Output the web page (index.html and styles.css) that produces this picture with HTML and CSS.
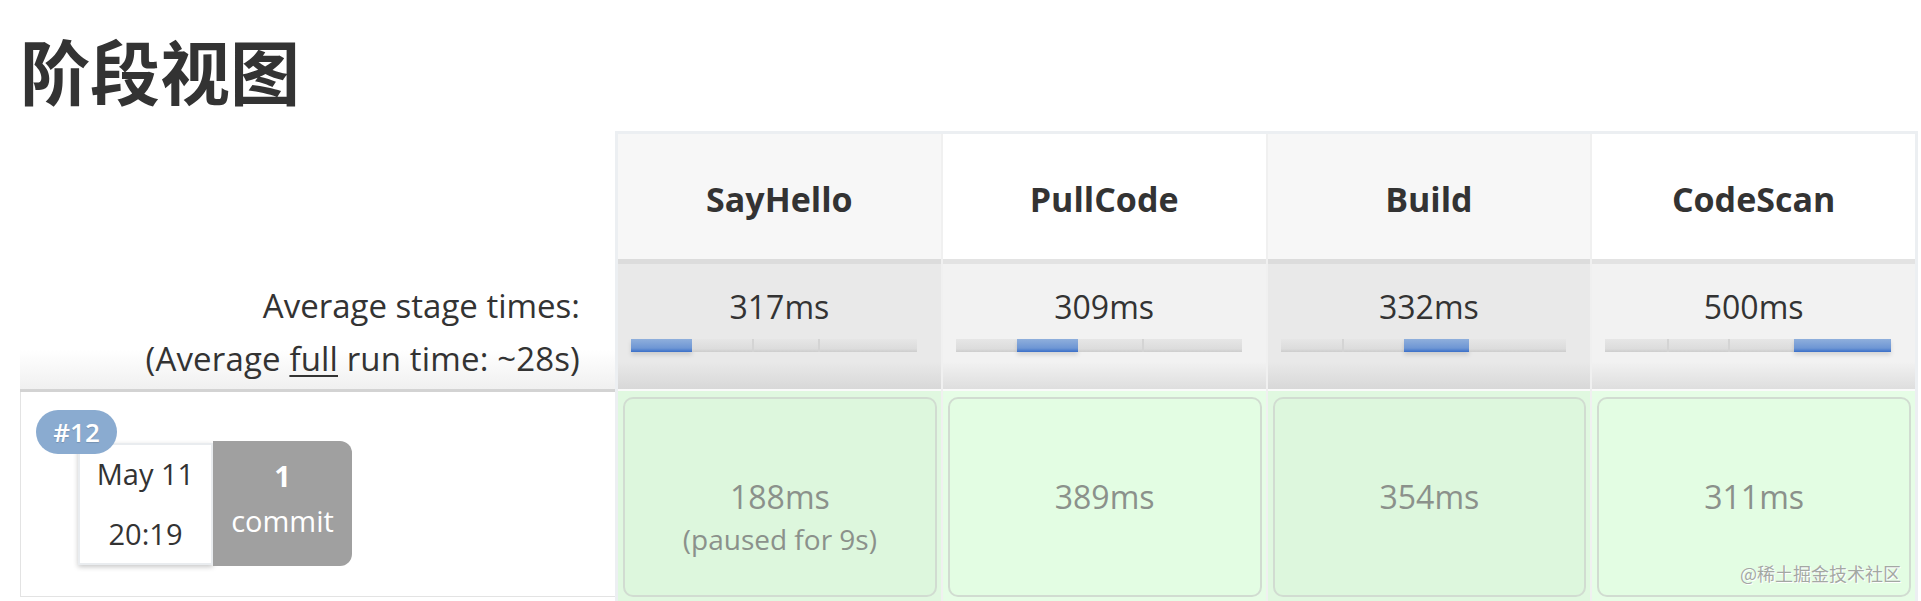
FILE: index.html
```html
<!DOCTYPE html>
<html lang="zh-CN">
<head>
<meta charset="utf-8">
<title>阶段视图</title>
<link rel="stylesheet" href="styles.css">
</head>
<body>
<div class="page">
  <h1 class="title">阶段视图</h1>
  <div class="view">
    <div class="labels">
      <div class="lbl-head"></div>
      <div class="lbl-avg">
        <div class="lbl-line">Average stage times:</div>
        <div class="lbl-line">(Average <u>full</u> run time: ~28s)</div>
      </div>
      <div class="lbl-run">
        <div class="run-info">
          <span class="badge">#12</span>
          <div class="date-box">
            <div>May 11</div>
            <div>20:19</div>
          </div>
          <div class="commit-box">
            <div class="commit-num">1</div>
            <div>commit</div>
          </div>
        </div>
      </div>
    </div>
    <div class="stages">
      <div class="head odd">SayHello</div>
      <div class="head even">PullCode</div>
      <div class="head odd">Build</div>
      <div class="head even">CodeScan</div>

      <div class="avg odd">
        <div class="avg-time">317ms</div>
        <div class="bar">
          <span class="seg on" style="flex-grow:317"></span>
          <span class="seg" style="flex-grow:309"></span>
          <span class="seg" style="flex-grow:332"></span>
          <span class="seg" style="flex-grow:500"></span>
        </div>
      </div>
      <div class="avg even">
        <div class="avg-time">309ms</div>
        <div class="bar">
          <span class="seg" style="flex-grow:317"></span>
          <span class="seg on" style="flex-grow:309"></span>
          <span class="seg" style="flex-grow:332"></span>
          <span class="seg" style="flex-grow:500"></span>
        </div>
      </div>
      <div class="avg odd">
        <div class="avg-time">332ms</div>
        <div class="bar">
          <span class="seg" style="flex-grow:317"></span>
          <span class="seg" style="flex-grow:309"></span>
          <span class="seg on" style="flex-grow:332"></span>
          <span class="seg" style="flex-grow:500"></span>
        </div>
      </div>
      <div class="avg even">
        <div class="avg-time">500ms</div>
        <div class="bar">
          <span class="seg" style="flex-grow:317"></span>
          <span class="seg" style="flex-grow:309"></span>
          <span class="seg" style="flex-grow:332"></span>
          <span class="seg on" style="flex-grow:500"></span>
        </div>
      </div>

      <div class="run odd">
        <div class="run-box">
          <div class="dur">188ms</div>
          <div class="paused">(paused for 9s)</div>
        </div>
      </div>
      <div class="run even">
        <div class="run-box">
          <div class="dur">389ms</div>
        </div>
      </div>
      <div class="run odd">
        <div class="run-box">
          <div class="dur">354ms</div>
        </div>
      </div>
      <div class="run even">
        <div class="run-box">
          <div class="dur">311ms</div>
          <span class="watermark">@稀土掘金技术社区</span>
        </div>
      </div>
    </div>
  </div>
</div>
</body>
</html>
```
FILE: styles.css
```css
* { box-sizing: border-box; }

html, body {
  margin: 0;
  background: #fff;
}

body {
  font-family: "Open Sans", "Noto Sans", "Noto Sans CJK SC", sans-serif;
  color: #333;
  overflow: hidden;
}

.page {
  padding: 0 3px 0 20px;
  height: 601px;
}

.title {
  margin: 0;
  height: 131px;
  padding-top: 35px;
  font-family: "Noto Sans CJK SC", sans-serif;
  font-weight: 700;
  font-size: 70px;
  line-height: 70px;
  color: #333;
}

.view {
  display: flex;
  align-items: flex-start;
}

/* left label column */
.labels {
  width: 595px;
  flex: none;
  display: flex;
  flex-direction: column;
}

.lbl-head {
  height: 128px;
}

.lbl-avg {
  height: 133px;
  border-bottom: 3px solid #d3d3d3;
  background: linear-gradient(#fff 70%, #f0f0f0);
  padding: 20px 35px 0 0;
  text-align: right;
  font-size: 33px;
  line-height: 53px;
  color: #333;
}

.lbl-line + .lbl-line {
  letter-spacing: 0.15px;
}

.lbl-line u {
  text-decoration-thickness: 2px;
  text-underline-offset: 4px;
}

.lbl-run {
  height: 205px;
  border-left: 1px solid #e3e3e3;
  border-bottom: 1px solid #e3e3e3;
  padding: 49px 0 0 57px;
}

.run-info {
  position: relative;
  display: flex;
  align-items: center;
}

.badge {
  position: absolute;
  left: -42px;
  top: -31px;
  width: 81px;
  height: 44px;
  border-radius: 22px;
  background: #8aabd0;
  color: #fff;
  font-weight: 600;
  font-size: 26px;
  line-height: 44px;
  text-align: center;
  text-shadow: 0 1px 1px rgba(0, 0, 0, 0.15);
  z-index: 2;
}

.date-box {
  width: 135px;
  height: 122px;
  background: #fff;
  border: 2px solid #e9ecef;
  box-shadow: 0 2px 5px rgba(0, 0, 0, 0.22);
  display: flex;
  flex-direction: column;
  justify-content: center;
  align-items: center;
  font-size: 29px;
  line-height: 60px;
  color: #333;
}

.commit-box {
  width: 139px;
  height: 125px;
  background: #a0a0a0;
  border-radius: 0 12px 12px 0;
  display: flex;
  flex-direction: column;
  justify-content: center;
  align-items: center;
  padding-bottom: 12px;
  color: #fff;
  font-size: 29px;
  line-height: 45px;
}

.commit-num {
  font-weight: 700;
}

/* stage grid */
.stages {
  flex: 1;
  border: 3px solid #eceff2;
  border-bottom: none;
  display: grid;
  grid-template-columns: repeat(4, 1fr);
  grid-template-rows: 125px 130px 212px;
  column-gap: 2px;
  background: #f0f0f0;
}

.head {
  display: flex;
  align-items: center;
  justify-content: center;
  font-weight: 700;
  font-size: 34px;
  color: #333;
  padding-top: 4px;
}
.head.odd { background: #f7f7f7; }
.head.even { background: #fff; }

.avg {
  padding: 21px 24px 0 13px;
  text-align: center;
}
.avg.odd {
  border-top: 5px solid #dcdcdc;
  background: linear-gradient(#e9e9e9 78%, #d8d8d8);
}
.avg.even {
  border-top: 5px solid #e3e3e3;
  background: linear-gradient(#f2f2f2 78%, #dedede);
}

.avg-time {
  font-size: 32px;
  line-height: 44px;
  color: #333;
  padding-left: 11px;
}

.bar {
  display: flex;
  height: 13px;
  margin-top: 10px;
  background: #e2e2e2;
}

.seg {
  flex-basis: 0;
  height: 13px;
  background: linear-gradient(#e6e6e6, #dcdcdc 75%, #cdcdcd);
  border-left: 2px solid #d4d4d4;
}
.seg:first-child { border-left: none; }
.seg.on {
  background: linear-gradient(#8fafdc, #6e96d4 70%, #3a6fc8);
  border-left: none;
  box-shadow: 0 3px 4px rgba(0, 0, 0, 0.12);
}
.seg.on + .seg { border-left: none; }

.run {
  border-top: 2px solid #fafafa;
  padding: 6px 4px 4px 5px;
}
.run.odd { background: #e0f8e0; }
.run.even { background: #e6fde6; }

.run-box {
  position: relative;
  height: 200px;
  border: 2px solid #d1dcd1;
  border-radius: 10px;
  padding-top: 76px;
  text-align: center;
  color: #8b918b;
}
.run.odd .run-box { background: #ddf7dd; }
.run.even .run-box { background: #e3fde3; }

.dur {
  font-size: 32px;
  line-height: 44px;
}

.paused {
  font-size: 28px;
  line-height: 40px;
}

.watermark {
  position: absolute;
  right: 8px;
  bottom: 12px;
  font-family: "Noto Sans CJK SC", sans-serif;
  font-size: 18px;
  line-height: 20px;
  color: #a3a8a3;
  text-shadow: 0 0 1px #fff, 1px 1px 0 #fff;
  letter-spacing: 0;
}
```
